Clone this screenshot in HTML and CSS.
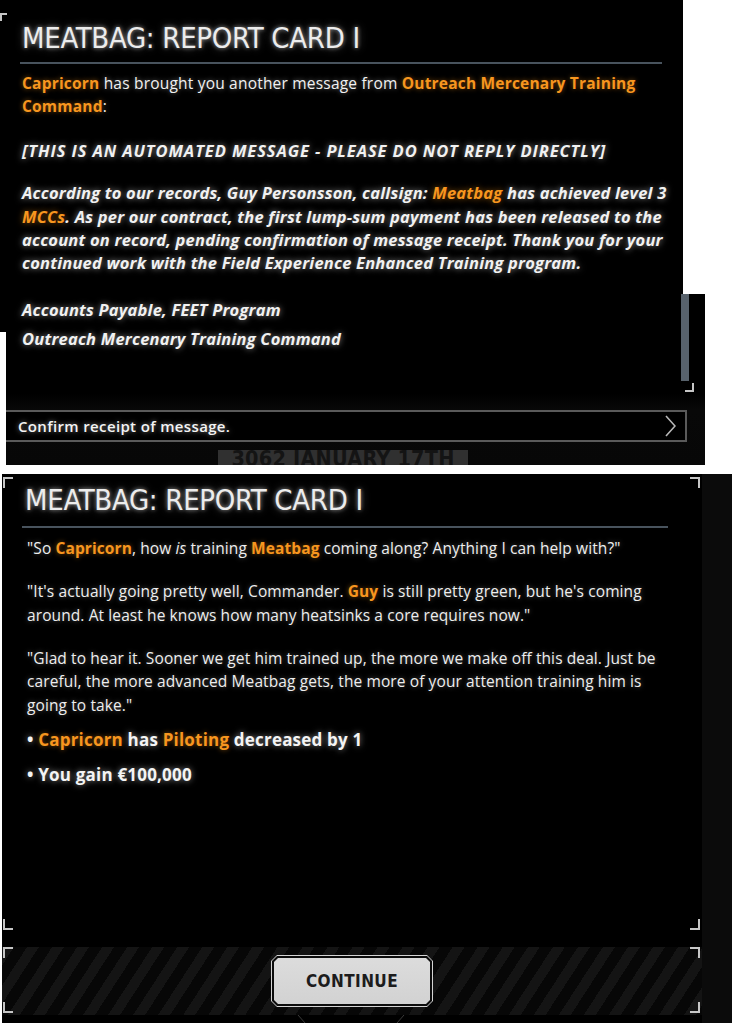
FILE: index.html
```html
<!DOCTYPE html>
<html lang="en">
<head>
<meta charset="utf-8">
<title>Meatbag: Report Card I</title>
<link rel="stylesheet" href="styles.css">
</head>
<body>
<div class="page">

  <section class="shot shot-a">
    <span class="corner corner-a"></span>
    <h1 class="title">MEATBAG: REPORT CARD I</h1>
    <div class="rule rule-a"></div>
    <div class="msg msg-a">
      <p class="lead"><b class="o">Capricorn</b> has brought you another message from <b class="o">Outreach Mercenary Training Command</b>:</p>
      <p class="em p-auto">[THIS IS AN AUTOMATED MESSAGE - PLEASE DO NOT REPLY DIRECTLY]</p>
      <p class="em p-body">According to our records, Guy Personsson, callsign: <span class="o">Meatbag</span> has achieved level 3 <span class="o">MCCs</span>. As per our contract, the first lump-sum payment has been released to the account on record, pending confirmation of message receipt. Thank you for your continued work with the Field Experience Enhanced Training program.</p>
      <p class="em p-sig1">Accounts Payable, FEET Program</p>
      <p class="em p-sig2">Outreach Mercenary Training Command</p>
    </div>
  </section>

  <section class="shot shot-b">
    <div class="b-top">
      <div class="scrollbar"></div>
      <span class="corner-br-inline"></span>
    </div>
    <div class="confirm">
      <span class="confirm-text">Confirm receipt of message.</span>
      <svg class="chev" width="11" height="22" viewBox="0 0 11 22"><polyline points="1,1 10,11 1,21" fill="none" stroke="#b8b8b8" stroke-width="1.6"/></svg>
    </div>
    <div class="date"><span>3062 JANUARY 17TH</span></div>
  </section>

  <section class="shot shot-c">
    <div class="c-main">
      <div class="dialog">
        <span class="corner c-tl"></span>
        <span class="corner c-tr"></span>
        <span class="corner c-bl"></span>
        <span class="corner c-br"></span>
        <h1 class="title">MEATBAG: REPORT CARD I</h1>
        <div class="rule rule-c"></div>
        <div class="msg msg-c">
          <p>"So <b class="o">Capricorn</b>, how <i>is</i> training <b class="o">Meatbag</b> coming along? Anything I can help with?"</p>
          <p>"It's actually going pretty well, Commander. <b class="o">Guy</b> is still pretty green, but he's coming around. At least he knows how many heatsinks a core requires now."</p>
          <p>"Glad to hear it. Sooner we get him trained up, the more we make off this deal. Just be careful, the more advanced Meatbag gets, the more of your attention training him is going to take."</p>
          <ul class="results">
            <li>• <span class="o">Capricorn</span> has <span class="o">Piloting</span> decreased by 1</li>
            <li>• You gain €100,000</li>
          </ul>
        </div>
      </div>
      <div class="footer">
        <span class="corner f-tl"></span>
        <span class="corner f-tr"></span>
        <span class="corner f-bl"></span>
        <span class="corner f-br"></span>
        <div class="btn"><div class="btn-ring"><div class="btn-face">CONTINUE</div></div></div>
      </div>
      <svg class="tail" width="700" height="8" viewBox="0 0 700 8"><line x1="296" y1="0" x2="303" y2="8" stroke="#3a3a3a" stroke-width="1"/><line x1="402" y1="0" x2="395" y2="8" stroke="#3a3a3a" stroke-width="1"/></svg>
    </div>
    <div class="side"></div>
  </section>

</div>
</body>
</html>
```

FILE: styles.css
```css
html, body {
  margin: 0;
  padding: 0;
  background: #ffffff;
}

.page {
  width: 742px;
  height: 1033px;
  overflow: hidden;
  font-family: "Open Sans", Roboto, "Liberation Sans", sans-serif;
  color: #f1f1f1;
}

.shot {
  background: #000;
  box-sizing: border-box;
}

/* ---------- common ---------- */
.title {
  margin: 0;
  font-family: "DejaVu Sans Condensed", "Liberation Sans Narrow", sans-serif;
  font-weight: 400;
  font-size: 29px;
  line-height: 34px;
  letter-spacing: -0.3px;
  color: #ececec;
  text-shadow: 0 0 4px rgba(255, 255, 255, 0.55), 0 0 10px rgba(255, 255, 255, 0.3);
  white-space: nowrap;
}

.rule {
  height: 2px;
  background: #48535d;
}

.msg p {
  margin: 0;
}

.o {
  color: #f7961f;
  font-weight: 700;
  text-shadow: 0 0 5px rgba(247, 150, 31, 0.5);
}

.corner {
  position: absolute;
  width: 8px;
  height: 9px;
  border: 0 solid #c6c6c6;
}

/* ---------- screenshot A ---------- */
.shot-a {
  position: relative;
  z-index: 2;
  width: 683px;
  height: 332px;
  padding: 21px 0 0 22px;
}

.corner-a {
  left: 0;
  top: 13px;
  width: 5px;
  height: 6px;
  border-left-width: 2px;
  border-top-width: 2px;
}

.rule-a {
  margin: 7px 0 0 -2px;
  width: 642px;
}

.msg-a {
  width: 652px;
  font-size: 15.5px;
  line-height: 23.3px;
  text-shadow: 0 0 5px rgba(255, 255, 255, 0.45);
}

.msg-a .lead {
  margin-top: 8px;
  letter-spacing: 0.2px;
}

.msg-a .em {
  font-style: italic;
  font-weight: 700;
  font-size: 16.5px;
  letter-spacing: 0.2px;
  text-shadow: 0 0 6px rgba(255, 255, 255, 0.55);
}

.msg-a .em .o {
  text-shadow: 0 0 6px rgba(247, 150, 31, 0.55);
}

.p-auto { margin-top: 20px !important; letter-spacing: 0.9px !important; }
.p-body { margin-top: 19.5px !important; }
.p-sig1 { margin-top: 23px !important; }
.p-sig2 { margin-top: 6px !important; }

/* ---------- screenshot B ---------- */
.shot-b {
  position: relative;
  width: 699px;
  height: 171px;
  margin: -38px 0 0 6px;
  background: linear-gradient(#000 0, #000 100px, #080808 116px, #070707 100%);
}

.b-top {
  height: 116px;
  display: flex;
  flex-direction: column;
  align-items: flex-end;
}

.scrollbar {
  position: relative;
  z-index: 3;
  width: 8px;
  height: 87px;
  margin-right: 16px;
  background: #58626c;
}

.corner-br-inline {
  width: 7px;
  height: 7px;
  margin: 2px 11px 0 0;
  border-right: 2px solid #c6c6c6;
  border-bottom: 2px solid #c6c6c6;
}

.confirm {
  width: 681px;
  height: 32px;
  box-sizing: border-box;
  border: 2px solid #5a5a5a;
  border-left: none;
  background: #000;
  display: flex;
  align-items: center;
  justify-content: space-between;
  padding: 0 9px 0 12px;
}

.confirm-text {
  font-size: 15px;
  font-weight: 600;
  letter-spacing: 0.35px;
  color: #f4f4f4;
  text-shadow: 0 0 5px rgba(255, 255, 255, 0.5);
}

.chev {
  display: block;
}

.date {
  width: 250px;
  height: 15px;
  margin: 8px 0 0 212px;
  background: #303030;
  overflow: hidden;
  text-align: center;
  font-family: "DejaVu Sans Condensed", "Liberation Sans Narrow", sans-serif;
  font-weight: 700;
  font-size: 21.5px;
  line-height: 18px;
  letter-spacing: 0.2px;
  color: #141414;
}

/* ---------- screenshot C ---------- */
.shot-c {
  width: 730px;
  height: 549px;
  margin: 9px 0 0 2px;
  display: grid;
  grid-template-columns: 700px 30px;
}

.side {
  background: #0b0b0b;
}

.c-main {
  display: flex;
  flex-direction: column;
}

.dialog {
  position: relative;
  height: 464px;
  box-sizing: border-box;
  padding: 9px 0 0 23px;
}

.c-tl { left: 1px; top: 3px; border-left-width: 2px; border-top-width: 2px; }
.c-tr { right: 2px; top: 3px; border-right-width: 2px; border-top-width: 2px; }
.c-bl { left: 1px; bottom: 8px; border-left-width: 2px; border-bottom-width: 2px; }
.c-br { right: 2px; bottom: 8px; border-right-width: 2px; border-bottom-width: 2px; }

.rule-c {
  margin: 9px 0 0 -3px;
  width: 646px;
}

.msg-c {
  width: 650px;
  margin: 9px 0 0 2px;
  font-size: 15.5px;
  line-height: 23.5px;
  letter-spacing: 0.1px;
  color: #eeeeee;
  text-shadow: 0 0 5px rgba(255, 255, 255, 0.35);
}

.msg-c p + p {
  margin-top: 19.5px;
}

.results {
  list-style: none;
  margin: 10.5px 0 0;
  padding: 0;
  font-size: 17px;
  font-weight: 700;
  letter-spacing: 0.2px;
  color: #f4f4f4;
  text-shadow: 0 0 6px rgba(255, 255, 255, 0.55);
}

.results li + li {
  margin-top: 11.5px;
}

.footer {
  position: relative;
  height: 68px;
  margin-top: 9px;
  background: repeating-linear-gradient(123deg, #141414 0 10px, #070707 10px 21px);
  display: flex;
  align-items: center;
  justify-content: center;
}

.f-tl { left: 1px; top: 0; border-left-width: 2px; border-top-width: 2px; }
.f-tr { right: 2px; top: 0; border-right-width: 2px; border-top-width: 2px; }
.f-bl { left: 1px; bottom: 2px; border-left-width: 2px; border-bottom-width: 2px; }
.f-br { right: 2px; bottom: 2px; border-right-width: 2px; border-bottom-width: 2px; }

.btn {
  width: 162px;
  height: 52px;
  box-sizing: border-box;
  padding: 1px;
  background: #d4d4d4;
  clip-path: polygon(6px 0, calc(100% - 6px) 0, 100% 6px, 100% calc(100% - 6px), calc(100% - 6px) 100%, 6px 100%, 0 calc(100% - 6px), 0 6px);
}

.btn-ring {
  height: 100%;
  box-sizing: border-box;
  padding: 2px;
  background: #0c0c0c;
  clip-path: polygon(5px 0, calc(100% - 5px) 0, 100% 5px, 100% calc(100% - 5px), calc(100% - 5px) 100%, 5px 100%, 0 calc(100% - 5px), 0 5px);
}

.btn-face {
  height: 100%;
  background: linear-gradient(#dcdcdc, #d2d2d2);
  clip-path: polygon(4px 0, calc(100% - 4px) 0, 100% 4px, 100% calc(100% - 4px), calc(100% - 4px) 100%, 4px 100%, 0 calc(100% - 4px), 0 4px);
  display: flex;
  align-items: center;
  justify-content: center;
  font-family: "DejaVu Sans Condensed", "Liberation Sans Narrow", sans-serif;
  font-weight: 700;
  font-size: 17px;
  letter-spacing: 0.4px;
  color: #1c1c1c;
}

.tail {
  display: block;
  background: #000;
}
```
